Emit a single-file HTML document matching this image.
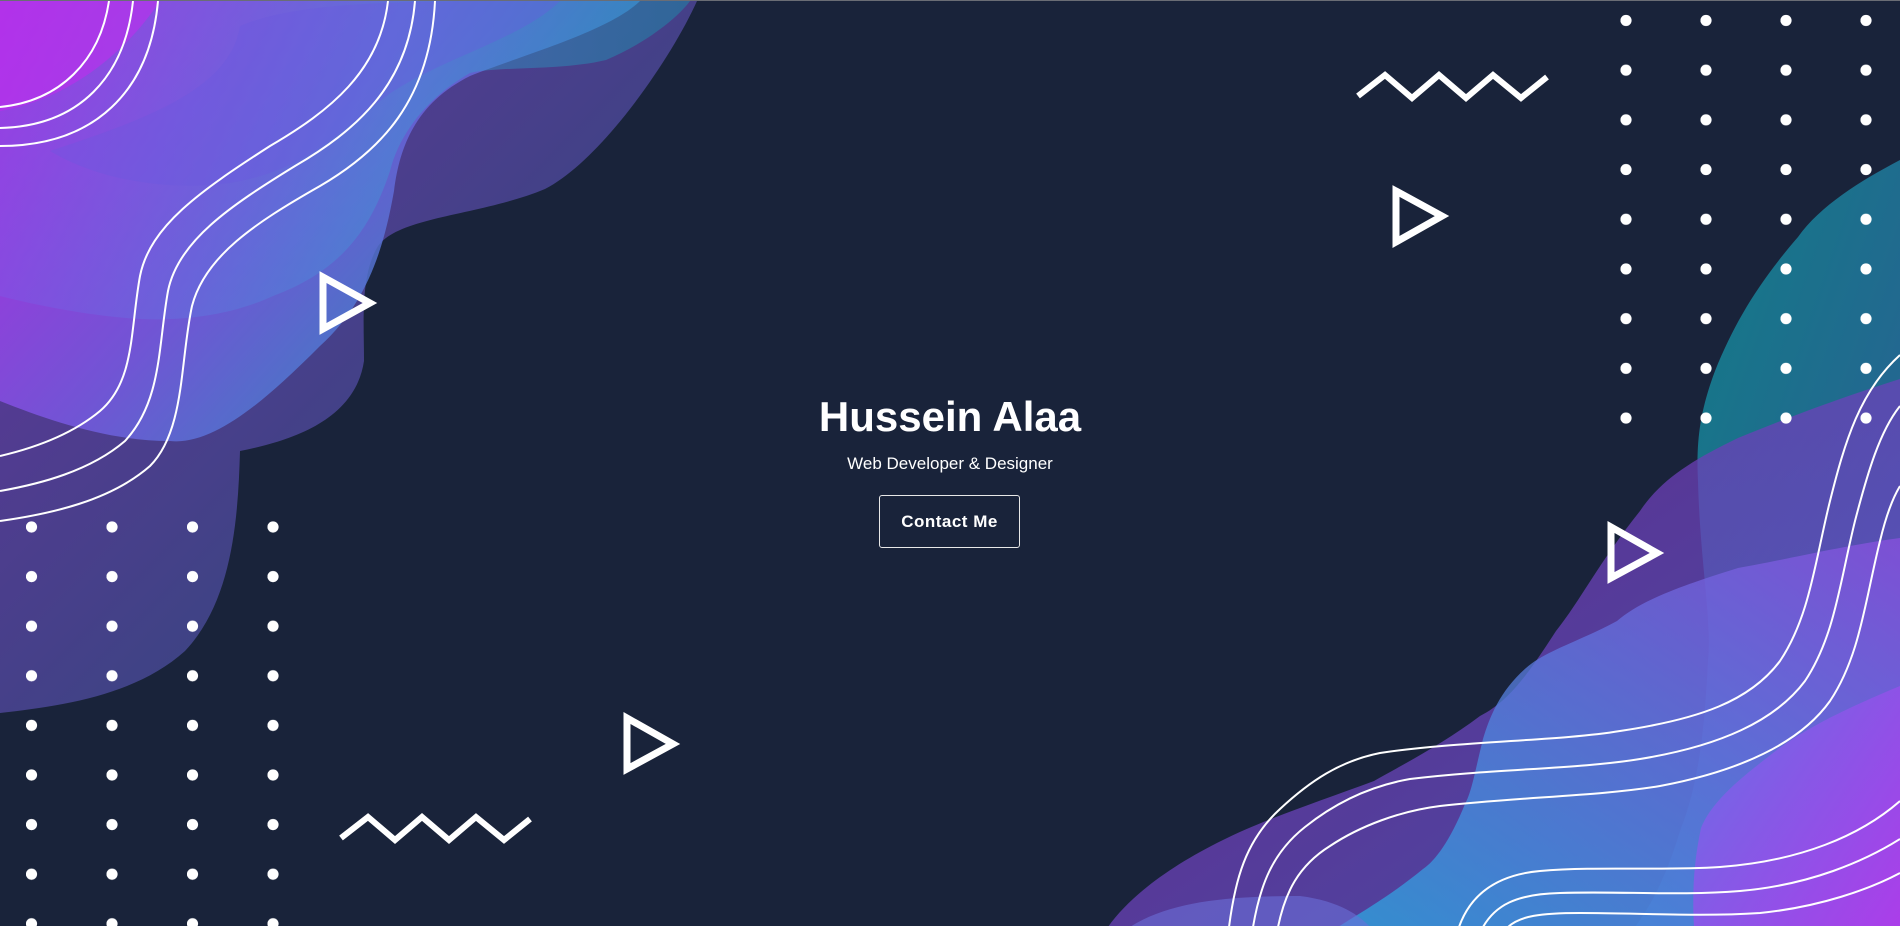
<!DOCTYPE html>
<html><head><meta charset="utf-8"><style>
html,body{margin:0;padding:0;width:1900px;height:926px;overflow:hidden;background:#19233a;}
body{position:relative;font-family:"Liberation Sans",sans-serif;border-top:1px solid #6a6d75;box-sizing:border-box;}
svg{position:absolute;left:0;top:0}
.c{position:absolute;left:0;width:1900px;text-align:center;color:#fff}
h1{margin:0;position:absolute;top:392px;left:0;width:1900px;text-align:center;color:#fff;font-size:42px;font-weight:bold;}
.sub{top:453px;font-size:17px}
.btn{position:absolute;left:879px;top:494px;width:139px;height:51px;border:1px solid #e8e8e8;border-radius:3px;color:#fff;font-weight:bold;font-size:17px;line-height:51px;text-align:center;letter-spacing:.5px}
</style></head><body>
<svg width="1900" height="926" viewBox="0 0 1900 926">
<defs>
<linearGradient id="g1" x1="0" y1="0" x2="1" y2="1"><stop offset="0" stop-color="#9a3ee0"/><stop offset="1" stop-color="#2a6a9a"/></linearGradient>
<linearGradient id="g2" x1="0" y1="0" x2="1" y2="0.6"><stop offset="0" stop-color="#c824f4"/><stop offset="0.5" stop-color="#7a5ae6"/><stop offset="1" stop-color="#22a6c8"/></linearGradient>
<linearGradient id="g3" x1="0" y1="0" x2="1" y2="0"><stop offset="0" stop-color="#7a5ae8"/><stop offset="0.6" stop-color="#3aa0d8"/><stop offset="1" stop-color="#10a0b0"/></linearGradient>
<linearGradient id="r1" x1="0" y1="0" x2="1" y2="1"><stop offset="0" stop-color="#0e8a8e"/><stop offset="1" stop-color="#3060a0"/></linearGradient>
<linearGradient id="r2" x1="0" y1="0" x2="1" y2="1"><stop offset="0" stop-color="#7a2aaa"/><stop offset="1" stop-color="#5a5ac8"/></linearGradient>
<linearGradient id="r3" x1="0" y1="1" x2="1" y2="0"><stop offset="0" stop-color="#2aa8e0"/><stop offset="1" stop-color="#8a50e0"/></linearGradient>
<linearGradient id="r4" x1="0" y1="0" x2="1" y2="1"><stop offset="0" stop-color="#6a70e8"/><stop offset="1" stop-color="#c030ee"/></linearGradient>
<pattern id="dl" x="26" y="520" width="80.5" height="49.6" patternUnits="userSpaceOnUse"><circle cx="5.5" cy="6" r="5.6" fill="#fff"/></pattern>
<pattern id="dr" x="1620.5" y="13.5" width="80" height="49.7" patternUnits="userSpaceOnUse"><circle cx="5.5" cy="6" r="5.6" fill="#fff"/></pattern>
</defs>
<path d="M0,0 H697 C670,60 600,160 545,188 C480,215 400,215 378,245 C360,275 364,320 364,360 C355,420 290,440 240,450 C238,520 232,600 185,650 C135,695 60,705 0,712 Z" fill="url(#g1)" opacity="0.6"/>
<path d="M0,0 H640 C610,30 520,55 470,75 C420,100 400,140 394,190 C385,240 370,300 320,345 C270,395 215,445 170,440 C110,440 50,420 0,400 Z" fill="url(#g2)" opacity="0.8"/>
<path d="M0,0 H690 C675,20 640,45 606,59 C560,70 500,65 470,72 C430,95 400,130 390,170 C370,230 340,270 273,295 C230,315 180,320 140,318 C90,315 40,305 0,295 Z" fill="url(#g3)" opacity="0.4"/>
<path d="M0,0 H160 C120,60 60,100 0,110 Z" fill="#c828f0" opacity="0.5"/>
<path d="M240,25 C300,0 400,0 560,0 C520,40 430,60 380,100 C330,140 300,170 230,182 C170,190 100,180 50,150 C140,120 230,90 240,25 Z" fill="#6a5ae0" opacity="0.35"/>
<g fill="none" stroke="#fff" stroke-width="2">
<path d="M109,0 C100,60 60,100 0,106"/>
<path d="M133,0 C125,75 80,125 0,127"/>
<path d="M158,0 C150,90 95,145 0,145"/>
<path d="M388,0 C380,70 330,110 270,145 C200,190 150,225 140,275 C130,330 135,380 100,410 C70,435 30,448 0,455"/>
<path d="M415,0 C408,85 355,130 295,165 C230,205 178,240 168,290 C158,345 162,400 125,440 C90,470 40,483 0,490"/>
<path d="M435,0 C430,100 380,150 320,185 C255,222 205,255 192,305 C180,360 185,430 150,465 C110,500 50,513 0,520"/>
</g>
<path d="M1900,159 C1860,180 1820,205 1798,236 C1760,280 1735,320 1715,370 C1700,410 1696,440 1698,480 C1700,560 1712,620 1708,660 C1705,720 1700,780 1680,830 C1665,880 1650,905 1635,926 H1900 Z" fill="url(#r1)" opacity="0.9"/>
<path d="M1900,378 C1830,400 1780,420 1738,437 C1690,460 1660,480 1640,510 C1600,560 1580,600 1556,630 C1530,670 1510,700 1480,715 C1440,745 1400,765 1374,780 C1320,800 1260,820 1223,839 C1170,865 1130,895 1108,926 H1900 Z" fill="url(#r2)" opacity="0.75"/>
<path d="M1900,537 C1840,545 1780,560 1738,567 C1680,585 1640,600 1617,620 C1580,640 1545,650 1526,667 C1500,690 1490,715 1483,738 C1475,770 1472,790 1465,803 C1450,840 1435,860 1423,868 C1390,895 1360,912 1338,926 H1900 Z" fill="url(#r3)" opacity="0.75"/>
<path d="M1130,926 C1170,900 1230,895 1300,895 C1340,900 1360,915 1370,926 Z" fill="#6a70d8" opacity="0.6"/>
<path d="M1900,685 C1840,710 1800,730 1768,756 C1730,785 1710,805 1701,827 C1694,860 1692,890 1694,926 H1900 Z" fill="url(#r4)" opacity="0.8"/>
<g fill="none" stroke="#fff" stroke-width="2">
<path d="M1229,926 C1235,880 1245,840 1280,808 C1310,780 1340,760 1380,752 C1460,740 1560,740 1620,730 C1700,718 1750,700 1780,660 C1810,615 1815,560 1830,500 C1845,440 1860,390 1900,354"/>
<path d="M1253,926 C1260,885 1272,852 1305,826 C1335,802 1370,785 1410,778 C1490,768 1580,768 1640,758 C1720,745 1775,720 1805,680 C1835,635 1840,580 1855,520 C1868,470 1880,430 1900,405"/>
<path d="M1278,926 C1285,892 1298,865 1330,845 C1360,825 1400,810 1440,805 C1520,796 1600,795 1660,785 C1740,770 1800,742 1830,700 C1860,655 1865,600 1880,540 C1886,515 1892,498 1900,485"/>
<path d="M1459,926 C1470,895 1495,874 1540,870 C1600,865 1660,870 1720,866 C1800,860 1860,835 1900,800"/>
<path d="M1483,926 C1495,905 1515,893 1560,892 C1620,890 1680,895 1740,890 C1810,884 1865,860 1900,838"/>
<path d="M1508,926 C1520,915 1540,912 1580,912 C1640,912 1700,916 1760,912 C1820,906 1870,888 1900,872"/>
</g>
<rect x="20" y="515" width="270" height="411" fill="url(#dl)"/>
<rect x="1615" y="8" width="285" height="418" fill="url(#dr)"/>
<g fill="none" stroke="#fff" stroke-width="7" stroke-linejoin="miter">
<path d="M323,276 L323,328 L370,302 Z"/>
<path d="M627,717 L627,768 L673,743 Z"/>
<path d="M1396,190 L1396,241 L1442,215 Z"/>
<path d="M1611,526 L1611,577 L1657,552 Z"/>
</g>
<g fill="none" stroke="#fff" stroke-width="6">
<polyline points="341,837 368,816 395,839 422,816 449,839 476,816 504,839 530,818"/>
<polyline points="1358,95 1385,74 1412,97 1439,74 1466,97 1493,74 1521,97 1547,76"/>
</g>
</svg>
<h1>Hussein Alaa</h1>
<div class="c sub">Web Developer &amp; Designer</div>
<div class="btn">Contact Me</div>
</body></html>
